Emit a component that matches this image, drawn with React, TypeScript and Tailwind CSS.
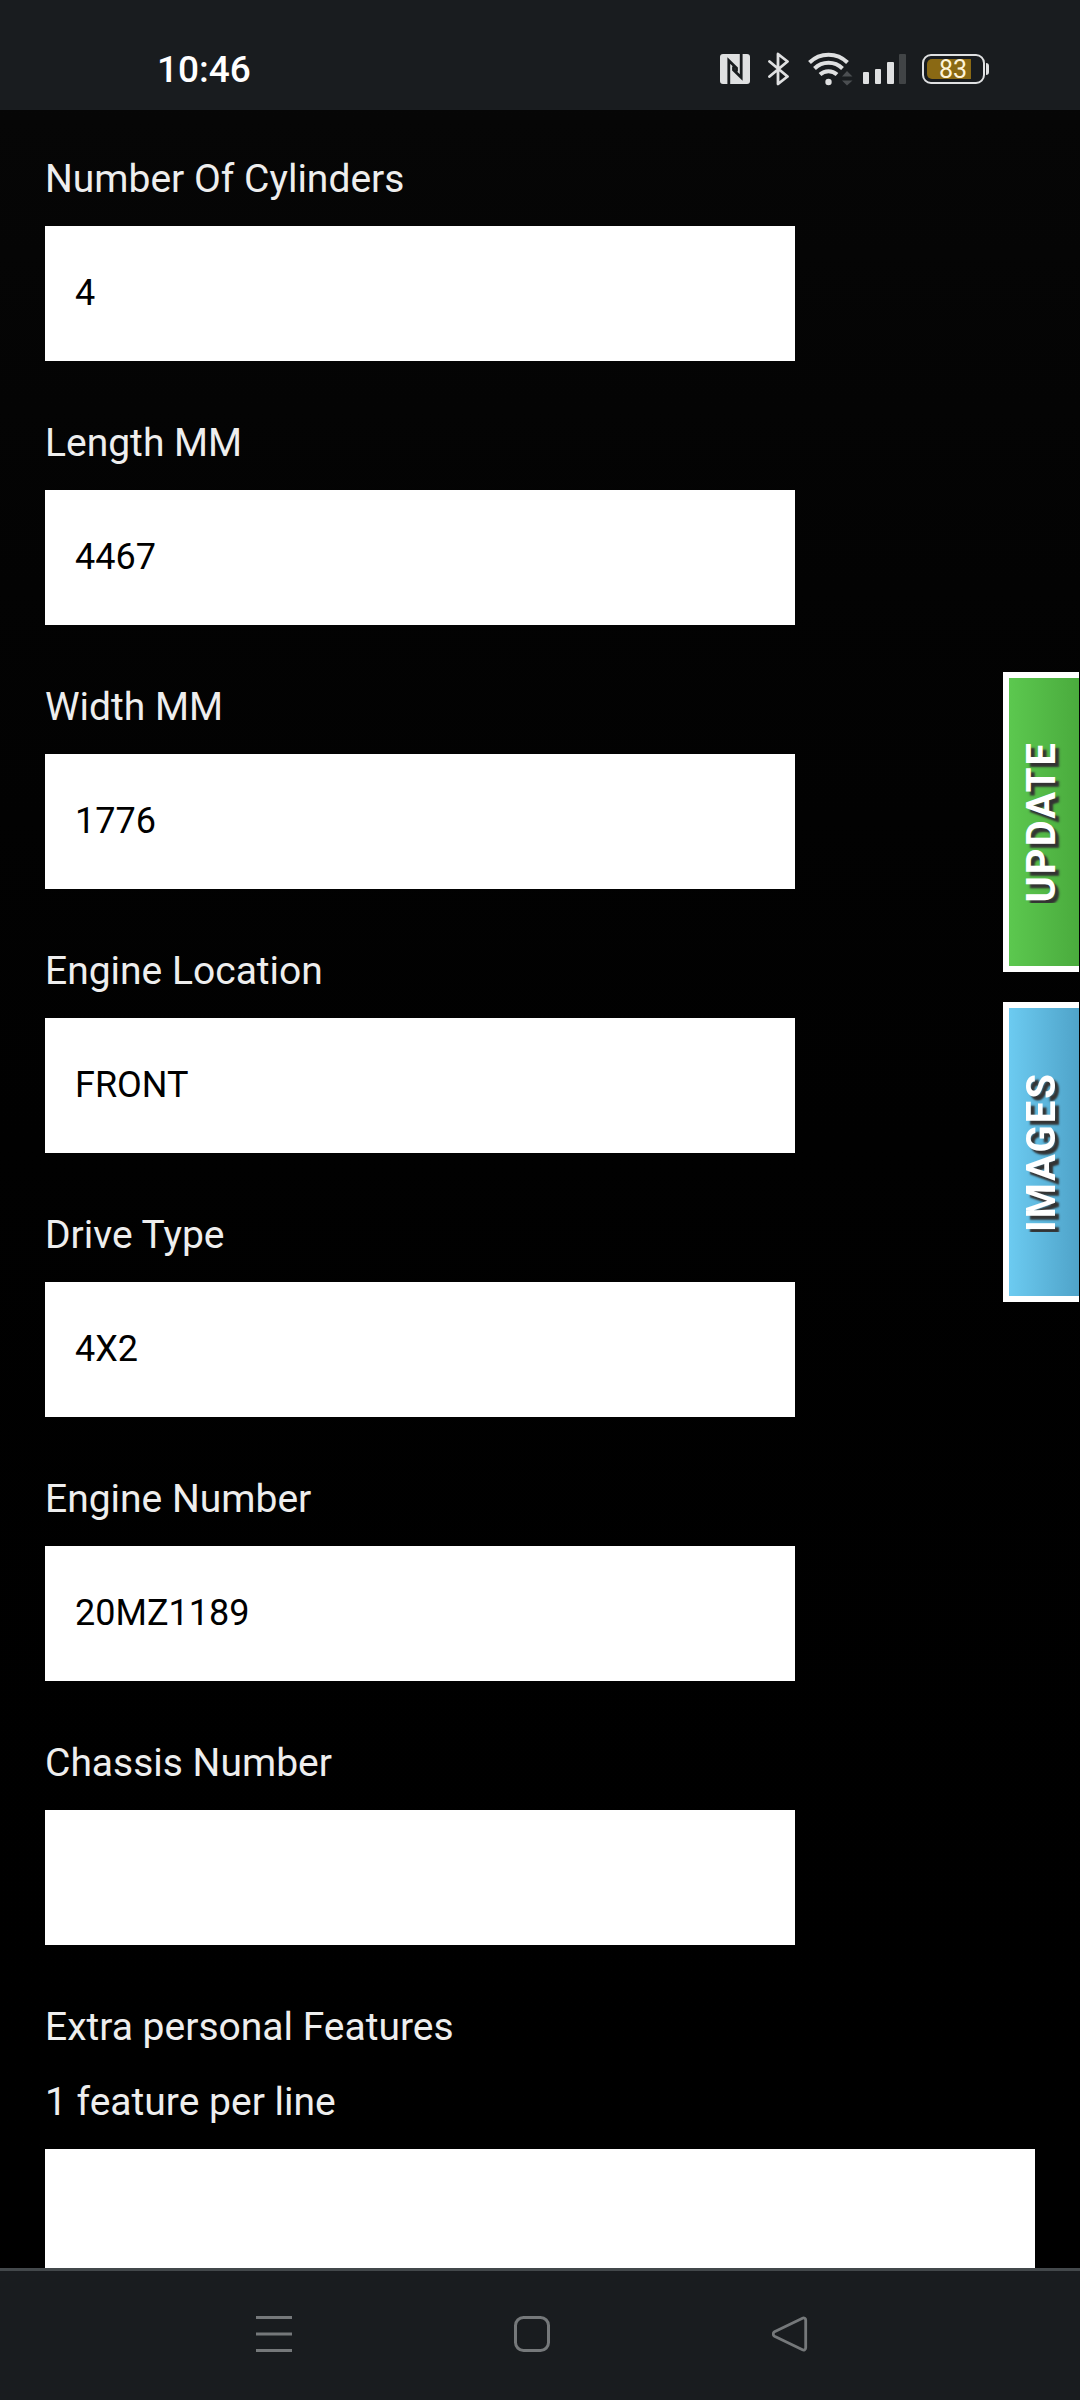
import { useState } from "react";

type Field = {
  id: string;
  label: string;
  value: string;
};

const initialFields: Field[] = [
  { id: "cylinders", label: "Number Of Cylinders", value: "4" },
  { id: "length", label: "Length MM", value: "4467" },
  { id: "width", label: "Width MM", value: "1776" },
  { id: "engine-location", label: "Engine Location", value: "FRONT" },
  { id: "drive-type", label: "Drive Type", value: "4X2" },
  { id: "engine-number", label: "Engine Number", value: "20MZ1189" },
  { id: "chassis-number", label: "Chassis Number", value: "" },
];

function NfcIcon() {
  return (
    <svg width="30" height="30" viewBox="0 0 30 30" aria-hidden="true">
      <rect width="30" height="30" rx="3" fill="#dfe0e1" />
      <path
        d="M8.8 30V6.5L16.500 14v3.500M21.2 0V23.5L13.500 16v-3.500"
        fill="none"
        stroke="#191c1f"
        strokeWidth="2.8"
      />
    </svg>
  );
}

function BluetoothIcon() {
  return (
    <svg width="22" height="34" viewBox="0 0 22 34" fill="none" aria-hidden="true">
      <path
        d="M1.5 9.5 19.5 24.5 10 32V2L19.5 9.5 1.5 24.5"
        stroke="#dfe0e1"
        strokeWidth="2.8"
        strokeLinejoin="round"
        strokeLinecap="round"
      />
    </svg>
  );
}

function WifiIcon() {
  return (
    <svg width="46" height="34" viewBox="0 0 46 34" fill="none" aria-hidden="true">
      <g stroke="#dfe0e1" strokeWidth="4">
        <path d="M1.5 10.5a27 27 0 0 1 38 0" />
        <path d="M6.5 16.5a20 20 0 0 1 28 0" />
        <path d="M12 22.5a12.5 12.5 0 0 1 17 0" />
      </g>
      <circle cx="20.5" cy="30" r="3.2" fill="#dfe0e1" />
      <path d="M34 24.5 39 19l5.5 5.5zM34 28.5l5 5 5.5-5z" fill="#4b4e51" />
    </svg>
  );
}

function SignalIcon() {
  return (
    <svg width="43" height="30" viewBox="0 0 43 30" aria-hidden="true">
      <g fill="#dfe0e1">
        <rect y="18" width="6" height="12" rx="1" />
        <rect x="12" y="15" width="6" height="15" rx="1" />
        <rect x="24" y="8" width="7" height="22" rx="1" />
      </g>
      <rect x="36" width="7" height="30" rx="1" fill="#414446" />
    </svg>
  );
}

function Battery() {
  return (
    <div className="flex items-center gap-px">
      <div className="flex h-[30px] w-[63px] rounded-[9px] border-2 border-[#dfe0e1] p-[3px]">
        <div className="flex w-[44px] items-center justify-end rounded-l-[5px] bg-[#8a6914] pr-1 text-[25px] leading-none text-[#fdf3da]">
          83
        </div>
      </div>
      <div className="h-3 w-[3px] rounded-r-sm bg-[#dfe0e1]" />
    </div>
  );
}

function StatusBar() {
  return (
    <header className="flex h-[110px] shrink-0 items-end justify-between bg-[#191c1f] pb-[24px] pl-[157px] pr-[91px]">
      <span className="text-[37px] font-medium leading-[32px] text-white">10:46</span>
      <div className="flex items-center">
        <NfcIcon />
        <div className="flex items-center gap-[18px] pl-[18px] pr-[9px]">
          <BluetoothIcon />
          <WifiIcon />
        </div>
        <div className="flex items-center gap-4">
          <SignalIcon />
          <Battery />
        </div>
      </div>
    </header>
  );
}

const sideTabClass =
  "flex h-[300px] w-[76px] items-center justify-center border-6 border-r-0 border-white bg-linear-to-r pr-[4px] text-[40px] font-bold text-white";
const sideTabTextClass =
  "rotate-180 tracking-[2px] [text-shadow:-4px_4px_2px_#333] [writing-mode:vertical-rl]";

function SideTabs() {
  return (
    <div className="fixed right-px top-[28%] flex flex-col gap-[30px]">
      <button type="button" className={`${sideTabClass} from-[#5cc84f] to-[#4aab3d]`}>
        <span className={sideTabTextClass}>UPDATE</span>
      </button>
      <button type="button" className={`${sideTabClass} from-[#6ccbf1] to-[#4fa3c9]`}>
        <span className={sideTabTextClass}>IMAGES</span>
      </button>
    </div>
  );
}

function NavBar() {
  return (
    <nav className="flex h-[132px] shrink-0 items-start justify-center gap-[222px] border-t-3 border-[#43484b] bg-[#191c1f] pr-4 pt-[45px] text-[#75787a]">
      <button type="button" aria-label="Recent apps">
        <svg width="36" height="36" viewBox="0 0 36 36" fill="currentColor">
          <path d="M0 0h36v3H0zM0 16.5h36v3H0zM0 33h36v3H0z" />
        </svg>
      </button>
      <button type="button" aria-label="Home">
        <svg width="36" height="36" viewBox="0 0 36 36" fill="none" stroke="currentColor">
          <rect x="1.5" y="1.5" width="33" height="33" rx="8" strokeWidth="3" />
        </svg>
      </button>
      <button type="button" aria-label="Back">
        <svg width="36" height="36" viewBox="0 0 36 36" fill="none" stroke="currentColor">
          <path
            d="M30.5 2.2 2.5 15.8a2.5 2.5 0 0 0 0 4.4L30.5 33.8a2.2 2.2 0 0 0 3.2-2V4.2a2.2 2.2 0 0 0-3.2-2z"
            strokeWidth="2.8"
          />
        </svg>
      </button>
    </nav>
  );
}

export default function App() {
  const [fields, setFields] = useState(initialFields);
  const [features, setFeatures] = useState("");

  function updateField(id: string, value: string) {
    setFields((prev) => prev.map((f) => (f.id === id ? { ...f, value } : f)));
  }

  return (
    <div className="flex h-screen flex-col bg-linear-to-b from-[#070707] to-black font-[Roboto,sans-serif]">
      <StatusBar />

      <main className="min-h-0 flex-1 overflow-y-auto px-[45px] pt-8 [scrollbar-width:none]">
        <form className="flex flex-col gap-[45px] text-[39px] leading-[75px] text-[#eeeeee]">
          {fields.map((f) => (
            <div key={f.id} className="flex flex-col gap-[9px]">
              <label htmlFor={f.id}>{f.label}</label>
              <input
                id={f.id}
                type="text"
                value={f.value}
                onChange={(e) => updateField(f.id, e.target.value)}
                className="h-[135px] w-full max-w-[750px] bg-white px-[30px] pb-[2px] text-[36px] text-black outline-none"
              />
            </div>
          ))}

          <div className="flex flex-col gap-[9px]">
            <label htmlFor="features">
              Extra personal Features
              <br />1 feature per line
            </label>
            <textarea
              id="features"
              rows={6}
              value={features}
              onChange={(e) => setFeatures(e.target.value)}
              className="w-full resize-none bg-white p-[30px] text-[36px] leading-[45px] text-black outline-none"
            />
          </div>
        </form>
      </main>

      <SideTabs />
      <NavBar />
    </div>
  );
}
